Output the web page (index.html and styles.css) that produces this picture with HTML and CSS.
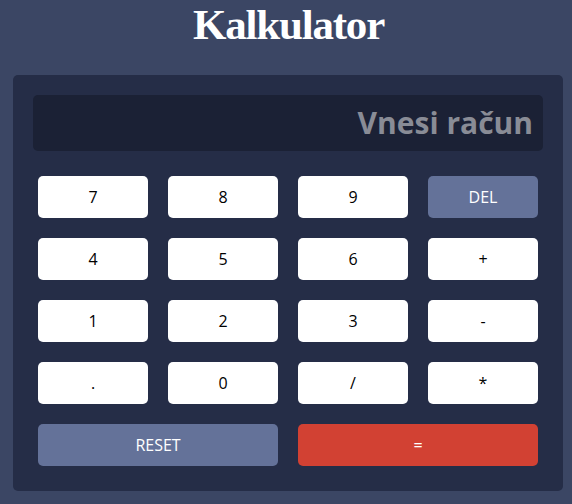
FILE: index.html
```html
<!DOCTYPE html>
<html>
<head>
<meta charset="utf-8">
<link rel="stylesheet" href="styles.css">
</head>
<body>
<h1 class="title">Kalkulator</h1>
<div class="calc">
  <div class="display">Vnesi račun</div>
  <div class="keys">
    <button class="key">7</button>
    <button class="key">8</button>
    <button class="key">9</button>
    <button class="key key-alt">DEL</button>
    <button class="key">4</button>
    <button class="key">5</button>
    <button class="key">6</button>
    <button class="key">+</button>
    <button class="key">1</button>
    <button class="key">2</button>
    <button class="key">3</button>
    <button class="key">-</button>
    <button class="key">.</button>
    <button class="key">0</button>
    <button class="key">/</button>
    <button class="key">*</button>
    <button class="key key-alt key-wide">RESET</button>
    <button class="key key-eq key-wide">=</button>
  </div>
</div>
</body>
</html>
```
FILE: styles.css
```css
html, body {
  margin: 0;
  padding: 0;
}
body {
  background: #3b4664;
  width: 572px;
  height: 504px;
  overflow: hidden;
}
.title {
  margin: 0;
  padding-left: 5px;
  height: 75px;
  line-height: 50px;
  text-align: center;
  color: #ffffff;
  font-family: "Liberation Serif", "Times New Roman", serif;
  font-weight: bold;
  font-size: 43px;
  letter-spacing: -1.2px;
}
.calc {
  margin: 0 9px 0 13px;
  width: 550px;
  box-sizing: border-box;
  padding: 20px;
  background: #252d47;
  border-radius: 5px;
}
.display {
  height: 56px;
  box-sizing: border-box;
  background: #1b2135;
  border-radius: 5px;
  color: #898c96;
  font-family: "Open Sans", sans-serif;
  font-weight: bold;
  font-size: 30px;
  line-height: 56px;
  text-align: right;
  padding-right: 10px;
}
.keys {
  margin-top: 20px;
  padding: 5px;
  display: grid;
  grid-template-columns: repeat(4, 110px);
  grid-auto-rows: 42px;
  gap: 20px;
}
.key {
  border: none;
  margin: 0;
  padding: 0;
  background: #ffffff;
  color: #000000;
  border-radius: 5px;
  font-family: "Open Sans", sans-serif;
  font-size: 16px;
}
.key-alt {
  background: #647299;
  color: #ffffff;
}
.key-eq {
  background: #d24133;
  color: #ffffff;
}
.key-wide {
  grid-column: span 2;
}
```
